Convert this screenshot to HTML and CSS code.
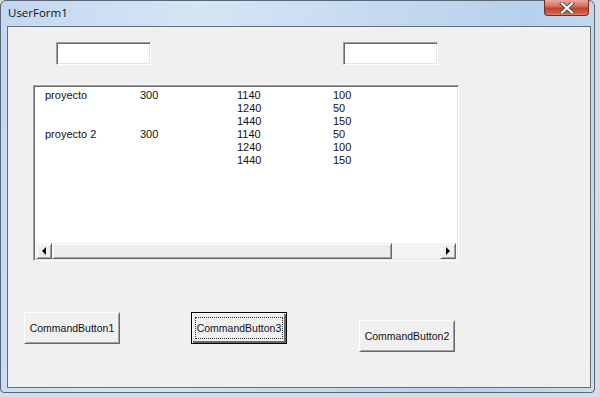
FILE: index.html
```html
<!DOCTYPE html>
<html lang="es">
<head>
  <meta charset="UTF-8">
  <title>UserForm1</title>
  <link rel="stylesheet" href="styles.css">
</head>
<body>
  <div class="window">
    <div class="titlebar">
      <span class="title">UserForm1</span>
      <span class="close-btn">
        <svg width="16" height="12" viewBox="0 0 16 12">
          <path d="M3 1.5 L13 10.5 M13 1.5 L3 10.5" stroke="#4a4a4a" stroke-width="4" stroke-linecap="square"/>
          <path d="M3 1.5 L13 10.5 M13 1.5 L3 10.5" stroke="#ffffff" stroke-width="2.2" stroke-linecap="square"/>
        </svg>
      </span>
    </div>

    <div class="client">
      <div class="text-row">
        <input class="textbox" type="text">
        <input class="textbox" type="text">
      </div>

      <div class="listbox">
        <div class="list-items">
          <div class="item"><span>proyecto</span><span>300</span><span>1140</span><span>100</span></div>
          <div class="item"><span></span><span></span><span>1240</span><span>50</span></div>
          <div class="item"><span></span><span></span><span>1440</span><span>150</span></div>
          <div class="item"><span>proyecto 2</span><span>300</span><span>1140</span><span>50</span></div>
          <div class="item"><span></span><span></span><span>1240</span><span>100</span></div>
          <div class="item"><span></span><span></span><span>1440</span><span>150</span></div>
        </div>
        <div class="hscroll">
          <div class="arrow-btn"><span class="tri-left"></span></div>
          <div class="thumb"></div>
          <div class="track"></div>
          <div class="arrow-btn"><span class="tri-right"></span></div>
        </div>
      </div>

      <div class="button-row">
        <button class="cmd">CommandButton1</button>
        <button class="cmd focused"><span class="focus-rect">CommandButton3</span></button>
        <button class="cmd low">CommandButton2</button>
      </div>
    </div>
  </div>
</body>
</html>
```

FILE: styles.css
```css
body {
  margin: 0;
  background-color: #d9dce0;
  font-family: 'Liberation Sans', Arial, sans-serif;
}

/* Window frame */
.window {
  width: 595px;
  height: 393px;
  box-sizing: border-box;
  background: linear-gradient(100deg, #c2d8f0 0%, #d6e5f5 30%, #c6dbf1 55%, #b7d1ec 80%, #c9ddf2 100%);
  border: 1px solid #5b6675;
  border-radius: 6px 6px 4px 4px;
  display: flex;
  flex-direction: column;
}
.titlebar {
  height: 25px;
  display: flex;
  justify-content: space-between;
  align-items: flex-start;
  padding: 0 5px 0 7px;
}
.title {
  font-family: 'Open Sans', 'Noto Sans', sans-serif;
  font-size: 11.5px;
  color: #111;
  margin-top: 4px;
}
.close-btn {
  width: 45px;
  height: 16px;
  box-sizing: border-box;
  margin-top: -1px;
  border: 1px solid #7b2a1e;
  border-top: none;
  border-radius: 0 0 4px 4px;
  background: linear-gradient(#e9a99b 0%, #d47462 40%, #c1442e 55%, #cf5a40 85%, #e0836a 100%);
  display: flex;
  align-items: center;
  justify-content: center;
}

/* Form client area */
.client {
  margin: 0 3px 0 6px;
  height: 362px;
  box-sizing: border-box;
  background-color: #f0f0f0;
  border: 1px solid #646c77;
}

.text-row {
  display: flex;
  gap: 192px;
  padding-left: 48px;
  margin-top: 15px;
}
.textbox {
  width: 95px;
  height: 23px;
  box-sizing: border-box;
  margin: 0;
  padding: 0;
  background: #fff;
  border: 1px solid;
  border-color: #a0a0a0 #ffffff #ffffff #a0a0a0;
  box-shadow: inset 1px 1px #696969, inset -1px -1px #e3e3e3;
}

/* List box */
.listbox {
  width: 426px;
  height: 176px;
  box-sizing: border-box;
  margin: 20px 0 0 25px;
  background: #fff;
  border: 1px solid;
  border-color: #a0a0a0 #ffffff #ffffff #a0a0a0;
  box-shadow: inset 1px 1px #696969, inset -1px -1px #e3e3e3;
  padding: 2px 2px 1px 2px;
  display: flex;
  flex-direction: column;
}
.list-items {
  flex: 1;
  padding: 1px 0 0 9px;
  font-size: 11px;
  line-height: 13px;
  color: #111;
}
.item {
  display: grid;
  grid-template-columns: 95px 97px 96px 1fr;
}
.hscroll {
  height: 16px;
  display: flex;
  background: #f4f4f4;
}
.arrow-btn {
  width: 16px;
  box-sizing: border-box;
  background: #f0f0f0;
  border: 1px solid;
  border-color: #f0f0f0 #696969 #696969 #f0f0f0;
  box-shadow: inset 1px 1px #fff, inset -1px -1px #a0a0a0;
  display: flex;
  align-items: center;
  justify-content: center;
}
.tri-left {
  width: 0; height: 0;
  border-top: 4px solid transparent;
  border-bottom: 4px solid transparent;
  border-right: 4px solid #000;
}
.tri-right {
  width: 0; height: 0;
  border-top: 4px solid transparent;
  border-bottom: 4px solid transparent;
  border-left: 4px solid #000;
}
.thumb {
  width: 340px;
  box-sizing: border-box;
  background: #ececec;
  border: 1px solid;
  border-color: #f0f0f0 #696969 #696969 #f0f0f0;
  box-shadow: inset 1px 1px #fff, inset -1px -1px #a0a0a0;
}
.track { flex: 1; }

/* Command buttons */
.button-row {
  display: flex;
  align-items: flex-start;
  gap: 71px;
  padding-left: 16px;
  margin-top: 51px;
}
.cmd {
  width: 96px;
  height: 32px;
  box-sizing: border-box;
  margin: 0;
  padding: 0;
  font-family: 'Liberation Sans', Arial, sans-serif;
  font-size: 10.5px;
  color: #10121a;
  background: #f0f0f0;
  border: 1px solid;
  border-color: #ffffff #696969 #696969 #ffffff;
  box-shadow: inset 1px 1px #f0f0f0, inset -1px -1px #a0a0a0;
}
.cmd.low { margin-top: 8px; margin-left: 1px; }
.cmd.focused {
  border: 1px solid #000;
  box-shadow: inset 1px 1px #fff, inset -2px -2px #696969;
  display: flex;
  align-items: center;
  justify-content: center;
}
.focus-rect {
  display: block;
  width: 88px;
  height: 22px;
  line-height: 20px;
  box-sizing: border-box;
  border: 1px dotted #333;
  text-align: center;
}
```
